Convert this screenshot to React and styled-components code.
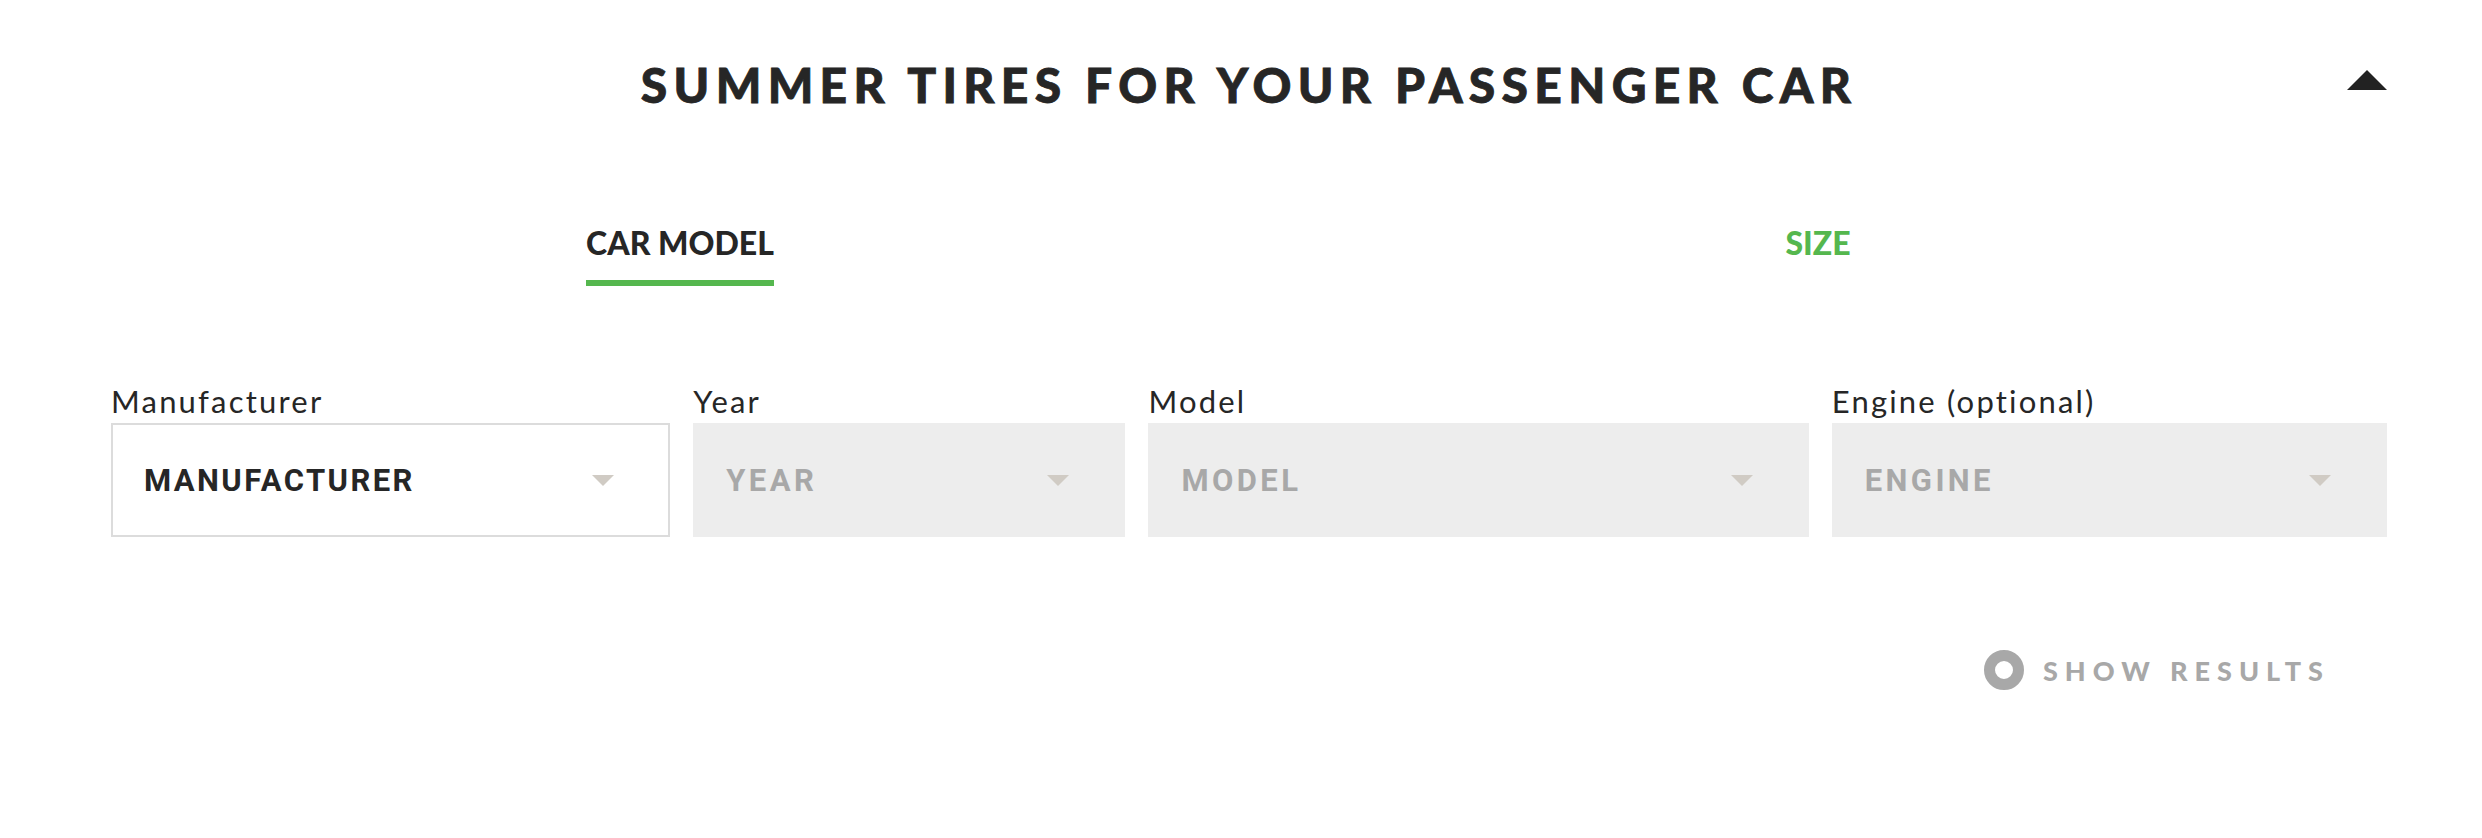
import React from 'react'
import styled, { createGlobalStyle } from 'styled-components'

const COLOR = {
  DARK: '#262626',
  GREEN: '#55b74e',
  FIELD_BG: '#ededed',
  FIELD_BORDER: '#dcdcdc',
  PLACEHOLDER: '#a8a8a8',
  CARET: '#d0cbc4',
  MUTED: '#a8a8a8',
}

const GlobalStyle = createGlobalStyle`
  html, body {
    margin: 0;
    padding: 0;
    background: #fff;
  }
  body {
    font-family: Lato, "Open Sans", sans-serif;
    color: ${COLOR.DARK};
  }
`

const Page = styled.div`
  padding: 61px 95px 0 111px;
`

const Header = styled.header`
  display: grid;
  grid-template-columns: 1fr auto 1fr;
  align-items: start;
`

const Title = styled.h1`
  grid-column: 2;
  margin: 0;
  font-family: Lato, sans-serif;
  font-weight: 900;
  font-size: 48px;
  line-height: 48px;
  letter-spacing: 6.3px;
  -webkit-text-stroke: 0.8px ${COLOR.DARK};
  color: ${COLOR.DARK};
  white-space: nowrap;
`

const CollapseButton = styled.button`
  grid-column: 3;
  justify-self: end;
  margin-top: 9px;
  padding: 0;
  border: 0;
  background: none;
  width: 40px;
  height: 20px;
  cursor: pointer;
  display: block;
`

const Tabs = styled.nav`
  display: flex;
  margin-top: 118px;
`

const TabCell = styled.div`
  flex: 1;
  display: flex;
  justify-content: center;
`

const Tab = styled.span`
  display: inline-block;
  font-family: Lato, sans-serif;
  font-weight: 900;
  font-size: 32px;
  line-height: 32px;
  padding-bottom: 21px;
  border-bottom: 6px solid ${props => (props.active ? COLOR.GREEN : 'transparent')};
  color: ${props => (props.active ? COLOR.DARK : COLOR.GREEN)};
  cursor: pointer;
`

const Fields = styled.div`
  display: grid;
  grid-template-columns: 559fr 432fr 660fr 555fr;
  column-gap: 23px;
  margin-top: 100px;
`

const Field = styled.div`
  display: flex;
  flex-direction: column;
  min-width: 0;
`

const Label = styled.label`
  font-family: Lato, sans-serif;
  font-weight: 400;
  font-size: 31px;
  line-height: 31px;
  letter-spacing: 2.2px;
  margin-bottom: 6px;
  color: ${COLOR.DARK};
  white-space: nowrap;
`

const SelectBox = styled.div`
  box-sizing: border-box;
  height: 114px;
  display: flex;
  align-items: center;
  justify-content: space-between;
  padding: 0 54px 0 31px;
  background: ${props => (props.enabled ? '#fff' : COLOR.FIELD_BG)};
  border: 2px solid ${props => (props.enabled ? COLOR.FIELD_BORDER : COLOR.FIELD_BG)};
  cursor: ${props => (props.enabled ? 'pointer' : 'default')};
`

const SelectValue = styled.span`
  font-family: Roboto, sans-serif;
  font-weight: 700;
  font-size: 31px;
  letter-spacing: ${props => (props.enabled ? '2.4px' : '3.4px')};
  color: ${props => (props.enabled ? COLOR.DARK : COLOR.PLACEHOLDER)};
`

const Footer = styled.div`
  display: flex;
  justify-content: flex-end;
  margin-top: 113px;
  padding-right: 64px;
`

const ShowResults = styled.button`
  display: flex;
  align-items: center;
  gap: 19px;
  padding: 0;
  border: 0;
  background: none;
  font-family: Lato, sans-serif;
  font-weight: 900;
  font-size: 27px;
  letter-spacing: 7px;
  margin-right: -7px;
  color: ${COLOR.MUTED};
  cursor: default;
`

const Ring = styled.span`
  box-sizing: border-box;
  width: 40px;
  height: 40px;
  border-radius: 50%;
  border: 11px solid ${COLOR.MUTED};
`

function Caret() {
  return (
    <svg width="22" height="11" viewBox="0 0 22 11">
      <path d="M0 0 L22 0 L11 11 Z" fill={COLOR.CARET} />
    </svg>
  )
}

const fields = [
  { label: 'Manufacturer', value: 'MANUFACTURER', enabled: true },
  { label: 'Year', value: 'YEAR' },
  { label: 'Model', value: 'MODEL' },
  { label: 'Engine (optional)', value: 'ENGINE' },
]

export default function App() {
  return (
    <Page>
      <GlobalStyle />
      <Header>
        <Title>SUMMER TIRES FOR YOUR PASSENGER CAR</Title>
        <CollapseButton aria-label="Collapse">
          <svg width="40" height="20" viewBox="0 0 40 20">
            <path d="M0 20 L20 0 L40 20 Z" fill="#222" />
          </svg>
        </CollapseButton>
      </Header>

      <Tabs>
        <TabCell>
          <Tab active>CAR MODEL</Tab>
        </TabCell>
        <TabCell>
          <Tab>SIZE</Tab>
        </TabCell>
      </Tabs>

      <Fields>
        {fields.map(field => (
          <Field key={field.label}>
            <Label>{field.label}</Label>
            <SelectBox enabled={field.enabled}>
              <SelectValue enabled={field.enabled}>{field.value}</SelectValue>
              <Caret />
            </SelectBox>
          </Field>
        ))}
      </Fields>

      <Footer>
        <ShowResults>
          <Ring />
          SHOW RESULTS
        </ShowResults>
      </Footer>
    </Page>
  )
}
